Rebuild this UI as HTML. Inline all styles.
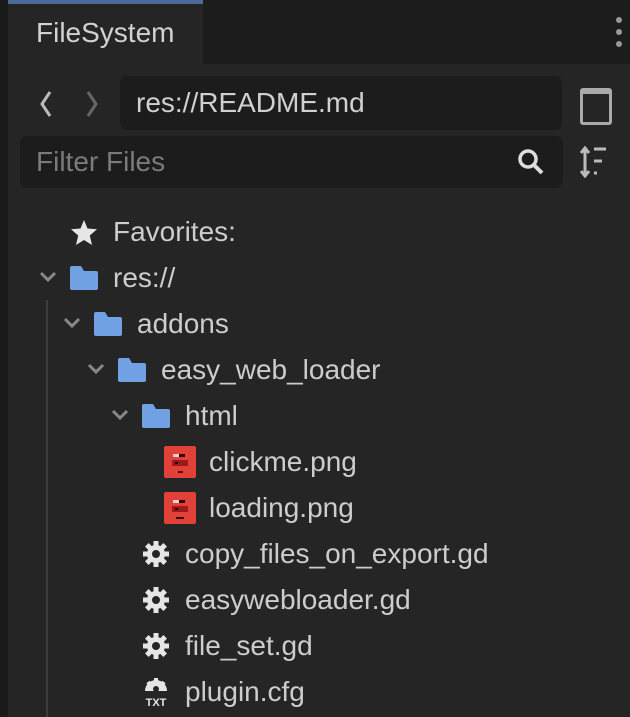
<!DOCTYPE html><html><head><style>
body{margin:0;width:630px;height:717px;background:#252525;overflow:hidden;font-family:"Liberation Sans","DejaVu Sans",sans-serif;color:#cdcdcd;position:relative}
.a{position:absolute}
.row{position:absolute;height:46px;line-height:46px;font-size:28px;white-space:nowrap}
.fold{position:absolute;width:28px;height:24px}
</style></head><body>
<div class="a" style="left:0;top:0;width:8px;height:717px;background:#1a1a1a"></div>
<div class="a" style="left:8px;top:0;width:622px;height:64px;background:#1c1c1c"></div>
<div class="a" style="left:8px;top:0;width:195px;height:64px;background:#252525"></div>
<div class="a" style="left:8px;top:0;width:195px;height:4px;background:#4b6a99"></div>
<div class="a" style="left:36px;top:17px;font-size:28px;color:#d2d2d2">FileSystem</div>
<div class="a" style="left:616px;top:17px;width:6px;height:6px;border-radius:3px;background:#999;box-shadow:0 12px 0 #999,0 24px 0 #999"></div>
<svg class="a" style="left:30px;top:88px" width="80" height="32"><path d="M20 4 L12 16 L20 28" stroke="#bbb" stroke-width="3" fill="none"/><path d="M58 4 L66 16 L58 28" stroke="#666" stroke-width="3" fill="none"/></svg>
<div class="a" style="left:120px;top:76px;width:442px;height:54px;background:#1c1c1c;border-radius:7px"></div>
<div class="a" style="left:136px;top:87px;font-size:28px;color:#d0d0d0">res://README.md</div>
<div class="a" style="left:580px;top:88px;width:26px;height:28px;border:3px solid #aaa;border-top-width:6px;border-radius:3px"></div>
<div class="a" style="left:20px;top:136px;width:543px;height:52px;background:#1c1c1c;border-radius:7px"></div>
<div class="a" style="left:36px;top:146px;font-size:28px;color:#7b7b7b">Filter Files</div>
<svg class="a" style="left:515px;top:146px" width="32" height="32"><circle cx="13" cy="13" r="8" stroke="#ddd" stroke-width="3.5" fill="none"/><path d="M19 19 L27 27" stroke="#ddd" stroke-width="4"/></svg>
<svg class="a" style="left:580px;top:146px" width="30" height="32"><path d="M5 3 V29 M1 7 L5 2 L9 7 M1 25 L5 30 L9 25" stroke="#bbb" stroke-width="3" fill="none"/><path d="M14 3 H26 M14 15 H22 M14 27 H17" stroke="#bbb" stroke-width="3"/></svg>
<div class="a" style="left:46px;top:300px;width:2px;height:417px;background:#3c3c3c"></div>

<svg class="a" style="left:70px;top:219px" width="28" height="28"><path d="M14 1 L17.5 9.5 L27 10.3 L19.8 16.5 L22 26 L14 21 L6 26 L8.2 16.5 L1 10.3 L10.5 9.5Z" fill="#e6e6e6"/></svg>
<div class="row" style="left:113px;top:209px">Favorites:</div>

<svg class="a" style="left:38px;top:270px" width="20" height="14"><path d="M3 3 L10 10 L17 3" stroke="#888" stroke-width="3" fill="none"/></svg>
<svg class="fold" style="left:70px;top:266px"><path d="M0 2 Q0 0 2 0 H11 L14 5 H26 Q28 5 28 7 V22 Q28 24 26 24 H2 Q0 24 0 22Z" fill="#6fa1e3"/></svg>
<div class="row" style="left:113px;top:255px">res://</div>

<svg class="a" style="left:62px;top:316px" width="20" height="14"><path d="M3 3 L10 10 L17 3" stroke="#888" stroke-width="3" fill="none"/></svg>
<svg class="fold" style="left:94px;top:312px"><path d="M0 2 Q0 0 2 0 H11 L14 5 H26 Q28 5 28 7 V22 Q28 24 26 24 H2 Q0 24 0 22Z" fill="#6fa1e3"/></svg>
<div class="row" style="left:137px;top:301px">addons</div>

<svg class="a" style="left:86px;top:362px" width="20" height="14"><path d="M3 3 L10 10 L17 3" stroke="#888" stroke-width="3" fill="none"/></svg>
<svg class="fold" style="left:118px;top:358px"><path d="M0 2 Q0 0 2 0 H11 L14 5 H26 Q28 5 28 7 V22 Q28 24 26 24 H2 Q0 24 0 22Z" fill="#6fa1e3"/></svg>
<div class="row" style="left:161px;top:347px">easy_web_loader</div>

<svg class="a" style="left:110px;top:408px" width="20" height="14"><path d="M3 3 L10 10 L17 3" stroke="#888" stroke-width="3" fill="none"/></svg>
<svg class="fold" style="left:142px;top:404px"><path d="M0 2 Q0 0 2 0 H11 L14 5 H26 Q28 5 28 7 V22 Q28 24 26 24 H2 Q0 24 0 22Z" fill="#6fa1e3"/></svg>
<div class="row" style="left:185px;top:393px">html</div>

<svg class="a" style="left:164px;top:446px" width="32" height="32"><rect width="32" height="32" rx="2" fill="#e2413a"/><rect x="9" y="8" width="6" height="3" fill="#f3d0d0"/><rect x="15" y="8" width="6" height="3" fill="#300"/><rect x="8" y="14" width="16" height="6" fill="#9e1a1a"/><rect x="11" y="16" width="3" height="2" fill="#200"/><rect x="14" y="25" width="5" height="2" fill="#500"/></svg>
<div class="row" style="left:209px;top:439px">clickme.png</div>
<svg class="a" style="left:164px;top:492px" width="32" height="32"><rect width="32" height="32" rx="2" fill="#e2413a"/><rect x="9" y="8" width="6" height="3" fill="#f3d0d0"/><rect x="15" y="8" width="6" height="3" fill="#300"/><rect x="8" y="14" width="16" height="6" fill="#9e1a1a"/><rect x="11" y="16" width="3" height="2" fill="#200"/><rect x="12" y="25" width="8" height="2" fill="#300"/></svg>
<div class="row" style="left:209px;top:485px">loading.png</div>

<svg class="a" style="left:0;top:0;width:0;height:0"><defs><g id="g"><circle cx="14" cy="14" r="9" fill="#e6e6e6"/><g stroke="#e6e6e6" stroke-width="5"><path d="M14 1 V27 M1 14 H27 M4.8 4.8 L23.2 23.2 M23.2 4.8 L4.8 23.2"/></g><circle cx="14" cy="14" r="4" fill="#252525"/></g></defs></svg>
<svg class="a" style="left:142px;top:540px" width="28" height="28"><use href="#g"/></svg>
<div class="row" style="left:185px;top:531px">copy_files_on_export.gd</div>
<svg class="a" style="left:142px;top:586px" width="28" height="28"><use href="#g"/></svg>
<div class="row" style="left:185px;top:577px">easywebloader.gd</div>
<svg class="a" style="left:142px;top:632px" width="28" height="28"><use href="#g"/></svg>
<div class="row" style="left:185px;top:623px">file_set.gd</div>
<svg class="a" style="left:142px;top:677px" width="28" height="30"><path d="M3 14 A11 11 0 0 1 25 14Z" fill="#e6e6e6"/><path d="M14 1 V8 M6 5 L9 9 M22 5 L19 9" stroke="#e6e6e6" stroke-width="4"/><circle cx="14" cy="12" r="3" fill="#252525"/><text x="14" y="29" font-size="11" font-weight="bold" fill="#e6e6e6" text-anchor="middle" font-family="Liberation Sans">TXT</text></svg>
<div class="row" style="left:185px;top:669px">plugin.cfg</div>
</body></html>
